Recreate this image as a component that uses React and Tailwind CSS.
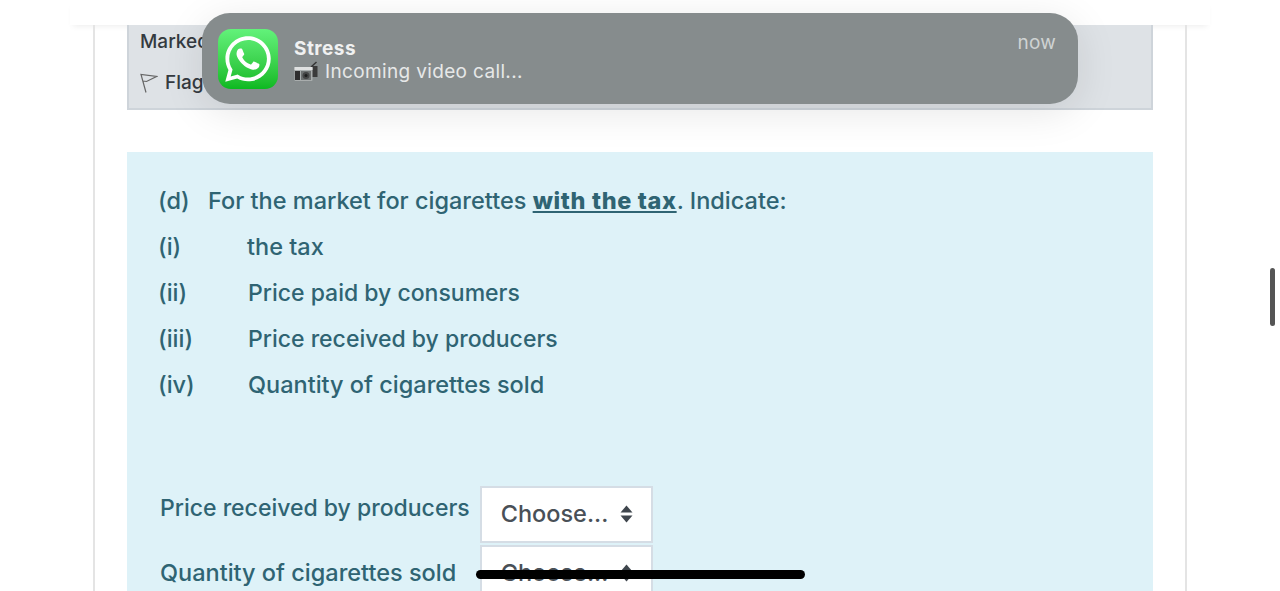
import React from 'react';
import { FaWhatsapp } from 'react-icons/fa';

const font = { fontFamily: 'Inter, "Noto Sans", sans-serif' };

const items = [
    { label: '(i)', text: 'the tax', size: '-ml-[1px] text-[23.5px]' },
    { label: '(ii)', text: 'Price paid by consumers', size: 'text-[23px]' },
    { label: '(iii)', text: 'Price received by producers', size: 'text-[23px]' },
    { label: '(iv)', text: 'Quantity of cigarettes sold', size: 'text-[23.5px]' },
];

const ChooseBox = ({ className = '' }) => (
    <div className={`flex h-[57px] w-[173px] items-center justify-between border-2 border-[#d5dde5] bg-white pb-[2px] pl-[19px] pr-[18px] text-[23.5px] text-[#495057] ${className}`}>
        <span>Choose...</span>
        <svg width="13" height="18" viewBox="0 0 13 18" fill="#3f464d">
            <path d="M6.5 0.5L12.5 7.5H0.5Z" />
            <path d="M0.5 10.5H12.5L6.5 17.5Z" />
        </svg>
    </div>
);

const CameraIcon = () => (
    <svg width="24" height="21" viewBox="0 0 24 21">
        <path d="M17 6L22.5 1" stroke="#333" strokeWidth="1.4" />
        <rect x="17" y="5" width="6.5" height="11" fill="#3a3a3a" />
        <rect x="0.5" y="6" width="18" height="14" rx="1" fill="#a9adad" />
        <rect x="0.5" y="6" width="18" height="3" fill="#dfe1e1" />
        <rect x="1" y="10" width="5" height="9" fill="#2e2e2e" />
        <rect x="7" y="10" width="10" height="9" fill="#6d7070" />
        <circle cx="12" cy="14.5" r="3.5" fill="#444" />
        <circle cx="12" cy="14.5" r="1.5" fill="#1d1d1d" />
    </svg>
);

const Notification = () => (
    <div className="absolute left-[202px] top-[13px] flex h-[91px] w-[876px] items-start rounded-[28px] bg-[#868c8d] pl-[16px] pr-[22px] pt-[16px] text-white shadow-[0_8px_40px_rgba(0,0,0,0.1)]">
        <div className="flex h-[60px] w-[60px] items-center justify-center rounded-[13px] bg-gradient-to-b from-[#62f27a] to-[#0ab91f]">
            <FaWhatsapp className="h-[52px] w-[52px] text-white" />
        </div>
        <div className="ml-[16px] flex-1 pt-[8px]">
            <div className="text-[19px] font-bold leading-[24px] tracking-[0.45px] text-[#f0f1f1]">Stress</div>
            <div className="flex items-center gap-[7px] text-[19px] leading-[21px] tracking-[0.35px] text-[#e6e8e8]">
                <CameraIcon />
                <span>Incoming video call...</span>
            </div>
        </div>
        <span className="pt-[2px] text-[19px] leading-[24px] tracking-[0.2px] text-[#cfd3d3]">now</span>
    </div>
);

const App = () => {
    return (
        <div className="relative h-[591px] overflow-hidden bg-white" style={font}>
            {/* Top bar */}
            <div className="mx-[70px] h-[25px] bg-white shadow-[0_4px_6px_-3px_rgba(0,0,0,0.08)]"></div>

            <div className="mx-[93px] h-[566px] border-x-2 border-[#e4e4e4] px-[32px]">
                {/* Question info */}
                <div className="h-[85px] border-x-2 border-b-2 border-[#ced4da] bg-[#dee2e6] pl-[11px] text-[19px] font-medium text-[#343a40]">
                    <div className="pt-[3px] leading-[28px]">Marked out of 1.00</div>
                    <div className="mt-[14px] flex items-center gap-[7px] leading-[26px]">
                        <svg width="18" height="20" viewBox="0 0 18 20" fill="none" stroke="#666" strokeWidth="1.2">
                            <path d="M6 19.5L1 1.5L16.5 3.5L6.5 8.5L3 8" />
                        </svg>
                        <span>Flag question</span>
                    </div>
                </div>

                {/* Question text */}
                <div className="mt-[42px] h-[500px] bg-[#def2f8] pl-[32px] pt-[26px] text-[23.5px] font-medium leading-[46px] text-[#2f6473]">
                    <div className="-ml-[1px] flex">
                        <span className="w-[50px]">(d)</span>
                        <span>
                            For the market for cigarettes <span className="font-extrabold tracking-[0.65px] underline">with the tax</span>. Indicate:
                        </span>
                    </div>
                    {items.map((item) => (
                        <div key={item.label} className="-ml-[1px] flex">
                            <span className="w-[90px]">{item.label}</span>
                            <span className={item.size}>{item.text}</span>
                        </div>
                    ))}

                    <div className="ml-[1px] mt-[78px] grid w-fit grid-cols-[auto_173px] gap-x-[10px] gap-y-[2px]">
                        <span className="-mt-[1px] text-[23px]">Price received by producers</span>
                        <ChooseBox />
                        <span className="mt-[5px]">Quantity of cigarettes sold</span>
                        <ChooseBox />
                    </div>
                </div>
            </div>

            <Notification />

            {/* Scrollbar */}
            <div className="absolute left-[1270px] top-[268px] h-[58px] w-[5px] rounded-full bg-[#555]"></div>
            {/* Home indicator */}
            <div className="absolute left-[476px] top-[570px] h-[9px] w-[329px] rounded-full bg-black"></div>
        </div>
    );
};

export default App;
